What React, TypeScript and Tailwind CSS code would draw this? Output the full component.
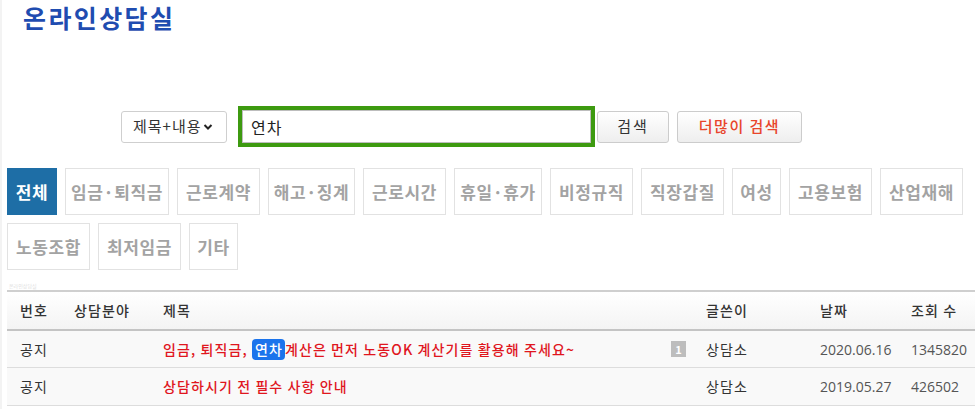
import React from "react";

const tabs1: [string, number][] = [
  ["전체", 50], ["임금·퇴직금", 104], ["근로계약", 83], ["해고·징계", 87], ["근로시간", 83], ["휴일·휴가", 88],
  ["비정규직", 83], ["직장갑질", 83], ["여성", 49], ["고용보험", 83], ["산업재해", 83],
];
const tabs2: [string, number][] = [["노동조합", 83], ["최저임금", 83], ["기타", 49]];

function Tab({ label, w, active }: { label: string; w: number; active?: boolean }) {
  return (
    <div
      style={{ width: w }}
      className={
        "h-[47px] flex items-center justify-center text-[17px] font-bold tracking-[0.6px] whitespace-nowrap border " +
        (active ? "bg-[#1e6ea6] border-[#1e6ea6] text-white" : "bg-white border-[#e2e2e2] text-[#a3a3a3]")
      }
    >
      {label}
    </div>
  );
}

export default function App() {
  const font = { fontFamily: '"Noto Sans CJK KR", "Noto Sans", sans-serif' };
  const num = { fontFamily: '"Open Sans", sans-serif' };
  return (
    <div className="w-[975px] h-[409px] overflow-hidden bg-white border-l-2 border-[#f3f3f3]" style={font}>
      <div className="pl-[21px] pt-[1px] h-[106px]">
        <h1 className="text-[25px] font-bold text-[#1f4cb0] leading-[32px] tracking-[2.4px]">온라인상담실</h1>
      </div>
      <div className="flex items-center pl-[119px] h-[41px]">
        <div className="w-[106px] h-[32px] border border-[#cfcfcf] rounded-[3px] flex items-center pl-[11px] pr-[4px] text-[15px] tracking-[1px] text-[#333]">
          <span>제목+내용</span>
          <svg className="ml-[1px]" width="10" height="8" viewBox="0 0 10 8"><path d="M1.5 2 L5 5.5 L8.5 2" stroke="#222" strokeWidth="2" fill="none" /></svg>
        </div>
        <div className="ml-[11px] w-[357px] h-[41px] border-[4px] border-[#3d9a10] bg-white">
          <div className="w-full h-full border border-[#bdbdbd] flex items-center pl-[8px] text-[16px] tracking-[1px] text-[#222]">연차</div>
        </div>
        <button className="ml-[2px] w-[72px] h-[32px] border border-[#cccccc] rounded-[3px] bg-gradient-to-b from-white to-[#eeeeee] text-[15px] tracking-[2px] text-[#333]">검색</button>
        <button className="ml-[8px] w-[125px] h-[32px] border border-[#cccccc] rounded-[3px] bg-gradient-to-b from-white to-[#eeeeee] text-[15px] tracking-[1.5px] text-[#e8452c] font-medium">더많이 검색</button>
      </div>
      <div className="pl-[5px] mt-[21px] flex flex-col gap-[8px]">
        <div className="flex gap-[8px]">
          {tabs1.map(([t, w], i) => (
            <Tab key={t} label={t} w={w} active={i === 0} />
          ))}
        </div>
        <div className="flex gap-[8px]">
          {tabs2.map(([t, w]) => (
            <Tab key={t} label={t} w={w} />
          ))}
        </div>
      </div>
      <div className="pl-[5px] mt-[12px]">
        <div className="text-[5px] leading-[8px] text-[#e0e0e0] pl-[2px] h-[8px]">온라인상담실</div>
        <div className="border-t-2 border-[#cfcfcf] text-[14px] tracking-[1.1px] text-[#333]">
          <div className="grid grid-cols-[54px_89px_543px_114px_91px_1fr] h-[39px] items-center bg-gradient-to-b from-white to-[#f4f4f4] border-b-2 border-[#c4c4c4] font-medium">
            <div className="pl-[13px]">번호</div>
            <div className="pl-[13px]">상담분야</div>
            <div className="pl-[13px]">제목</div>
            <div className="pl-[13px]">글쓴이</div>
            <div className="pl-[13px]">날짜</div>
            <div className="pl-[13px]">조회 수</div>
          </div>
          <div className="grid grid-cols-[54px_89px_543px_114px_91px_1fr] h-[37px] items-center bg-[#f9f9f9] border-b border-[#dddddd]">
            <div className="pl-[13px]">공지</div>
            <div className="pl-[13px]"></div>
            <div className="pl-[13px] pr-[7px] flex items-center justify-between">
              <span className="text-[#e0161e] font-medium flex items-center whitespace-pre">
                {"임금, 퇴직금, "}<span className="bg-[#1b74ec] text-white rounded-[4px] pl-[3px] pr-[2px] leading-[21px]">연차</span>계산은 먼저 노동OK 계산기를 활용해 주세요~
              </span>
              <span className="w-[15px] h-[16px] bg-[#bdbdbd] text-white text-[11px] font-bold tracking-normal flex items-center justify-center">1</span>
            </div>
            <div className="pl-[13px]">상담소</div>
            <div className="pl-[13px] text-[#555] tracking-normal" style={num}>2020.06.16</div>
            <div className="pl-[13px] text-[#555] tracking-normal" style={num}>1345820</div>
          </div>
          <div className="grid grid-cols-[54px_89px_543px_114px_91px_1fr] h-[38px] items-center bg-[#f9f9f9] border-b border-[#dddddd]">
            <div className="pl-[13px]">공지</div>
            <div className="pl-[13px]"></div>
            <div className="pl-[13px] text-[#e0161e] font-medium">상담하시기 전 필수 사항 안내</div>
            <div className="pl-[13px]">상담소</div>
            <div className="pl-[13px] text-[#555] tracking-normal" style={num}>2019.05.27</div>
            <div className="pl-[13px] text-[#555] tracking-normal" style={num}>426502</div>
          </div>
        </div>
      </div>
    </div>
  );
}
